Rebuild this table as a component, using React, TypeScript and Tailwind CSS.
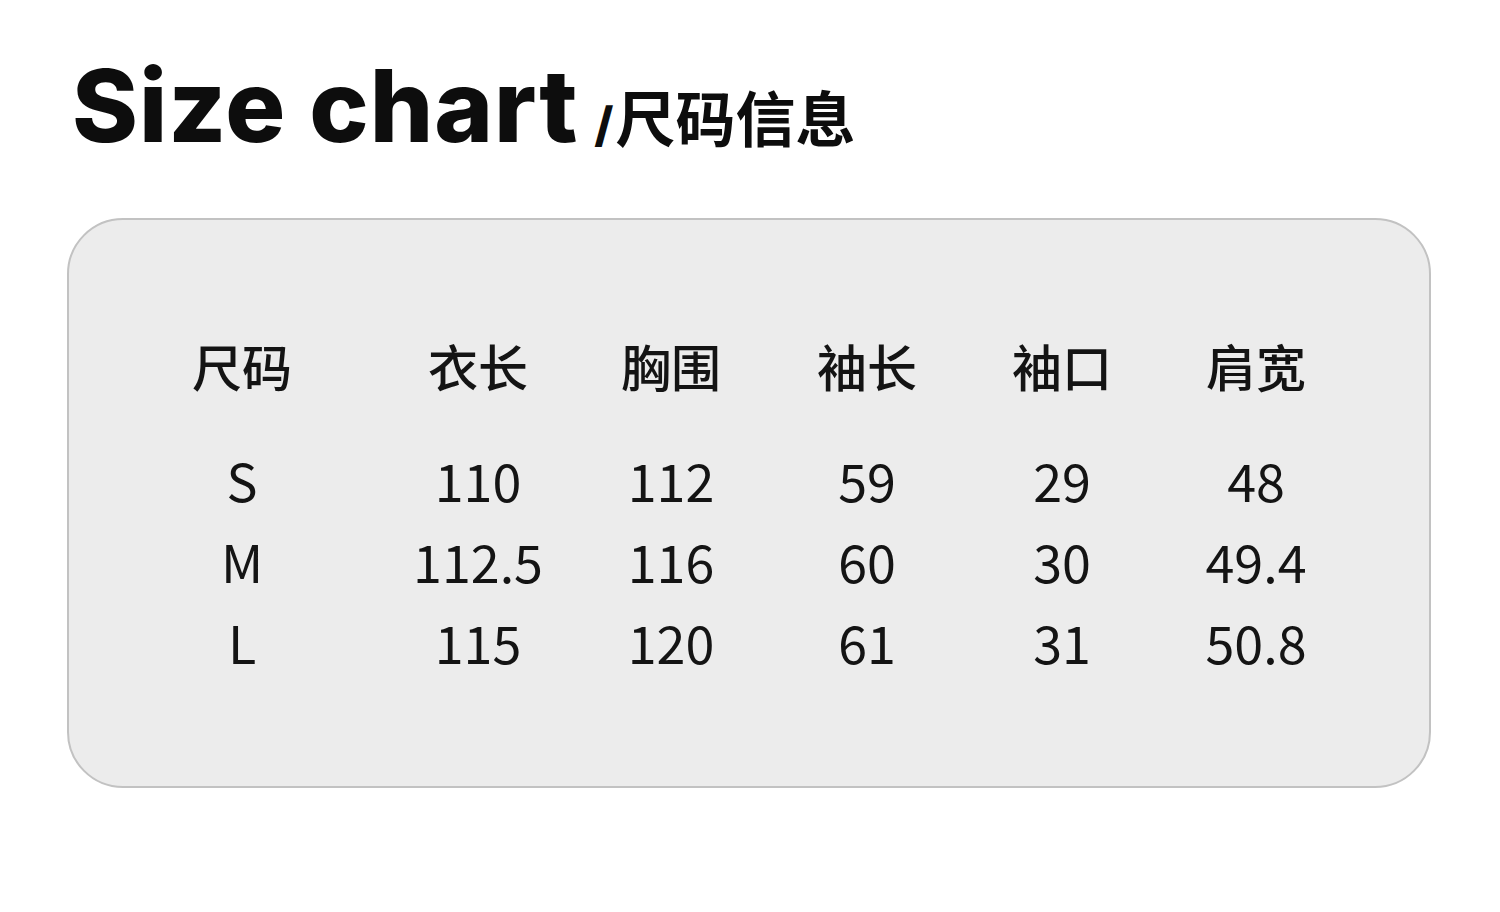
import React from "react";

const headers = ["尺码", "衣长", "胸围", "袖长", "袖口", "肩宽"];
const rows = [
  ["S", "110", "112", "59", "29", "48"],
  ["M", "112.5", "116", "60", "30", "49.4"],
  ["L", "115", "120", "61", "31", "50.8"],
];

export default function App() {
  return (
    <div className="w-[1500px] h-[912px] bg-white overflow-hidden relative" style={{ fontFamily: '"Noto Sans CJK SC", "Noto Sans", sans-serif' }}>
      <div className="flex items-baseline pl-[72px] pt-[56px] h-[218px]">
        <span
          className="text-[100px] leading-[100px] font-extrabold tracking-[1px] text-[#0d0d0d]"
          style={{ fontFamily: 'Inter, "Liberation Sans", sans-serif' }}
        >
          Size chart
        </span>
        <span
          className="ml-[16px] text-[48px] leading-[48px] font-extrabold text-[#0d0d0d]"
          style={{ fontFamily: 'Inter, "Liberation Sans", sans-serif' }}
        >
          /
        </span>
        <span
          className="ml-[2px] text-[60px] leading-[60px] font-bold text-[#0d0d0d]"
          style={{ fontFamily: '"Noto Sans CJK SC", sans-serif' }}
        >
          尺码信息
        </span>
      </div>
      <div className="ml-[67px] w-[1364px] h-[570px] rounded-[56px] border-2 border-[#c2c2c2] bg-[#ececec] pt-[105px] pl-[32px]">
        <div className="grid grid-cols-[282px_190px_196px_196px_194px_194px] text-[#141414]">
          {headers.map((h) => (
            <div key={h} className="text-center text-[50px] leading-[80px] font-medium">
              {h}
            </div>
          ))}
        </div>
        <div className="mt-[34px]">
          {rows.map((r) => (
            <div key={r[0]} className="grid grid-cols-[282px_190px_196px_196px_194px_194px] text-[#141414]">
              {r.map((c, i) => (
                <div key={i} className="text-center text-[52px] leading-[81px]">
                  {c}
                </div>
              ))}
            </div>
          ))}
        </div>
      </div>
    </div>
  );
}
